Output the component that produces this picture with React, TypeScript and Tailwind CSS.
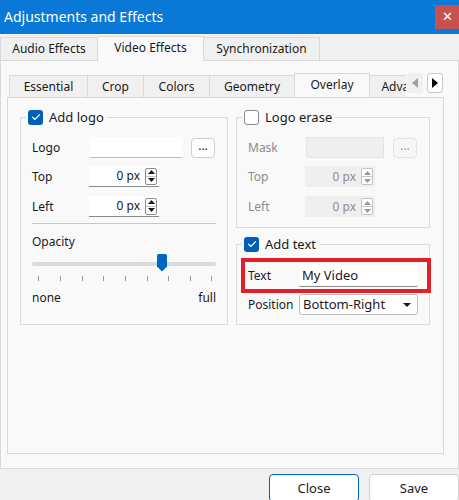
import React from 'react';

const CheckBox = ({ checked }: { checked: boolean }) =>
  checked ? (
    <span className="w-[15px] h-[15px] rounded-[3px] bg-[#005fb8] flex items-center justify-center">
      <svg width="10" height="10" viewBox="0 0 10 10" fill="none">
        <path d="M1.5 5.2l2.3 2.3L8.6 2.6" stroke="#fff" strokeWidth="1.1" strokeLinecap="round" strokeLinejoin="round" />
      </svg>
    </span>
  ) : (
    <span className="w-[15px] h-[15px] rounded-[3px] bg-white border border-[#878787]" />
  );

const Spinner = ({ disabled }: { disabled?: boolean }) => {
  const c = disabled ? '#9a9a9a' : '#1a1a1a';
  return (
    <div className={`flex flex-col w-[12px] h-[17px] border ${disabled ? 'border-[#c4c4c4]' : 'border-[#8c8c8c]'} rounded-[2px] bg-white`}>
      <div className="flex-1 flex items-center justify-center border-b border-[#c4c4c4]">
        <svg width="7" height="4" viewBox="0 0 7 4"><path d="M0 4L3.5 0L7 4Z" fill={c} /></svg>
      </div>
      <div className="flex-1 flex items-center justify-center">
        <svg width="7" height="4" viewBox="0 0 7 4"><path d="M0 0L3.5 4L7 0Z" fill={c} /></svg>
      </div>
    </div>
  );
};

const SpinBox = ({ disabled }: { disabled?: boolean }) => (
  <div
    className={`w-[70px] h-[21px] flex items-center justify-end pr-[2px] gap-[5px] ${
      disabled ? 'bg-[#efefef] text-[#8c8c8c]' : 'bg-white border-b border-[#8a8a8a] text-[#1a1a1a]'
    }`}
  >
    <span>0 px</span>
    <Spinner disabled={disabled} />
  </div>
);

const DotsButton = ({ disabled }: { disabled?: boolean }) => (
  <div
    className={`w-[24px] h-[20px] rounded-[4px] border flex items-center justify-center pb-[4px] ${
      disabled ? 'border-[#e3e3e3] bg-[#f7f7f7] text-[#9a9a9a]' : 'border-[#d0d0d0] bg-white text-[#1a1a1a]'
    }`}
  >
    ...
  </div>
);

export default function App() {
  const outerTabs = [
    { label: 'Audio Effects', w: 'w-[98px]' },
    { label: 'Video Effects', w: 'w-[107px]', active: true },
    { label: 'Synchronization', w: 'w-[117px]' },
  ];
  const innerTabs = [
    { label: 'Essential', w: 'w-[79px]' },
    { label: 'Crop', w: 'w-[57px]' },
    { label: 'Colors', w: 'w-[67px]' },
    { label: 'Geometry', w: 'w-[86px]' },
    { label: 'Overlay', w: 'w-[76px]', active: true },
    { label: 'Advanced', w: 'w-[80px]' },
  ];
  const ticks = [38, 60, 82, 103, 125, 147, 168, 190, 211];

  return (
    <div className="w-[459px] h-[500px] bg-[#f0f0f0] flex flex-col overflow-hidden font-['Noto_Sans',sans-serif] text-[12px] text-[#1a1a1a] leading-none">
      {/* Title bar */}
      <div className="h-[34px] bg-[#0a78d7] flex items-center justify-between shrink-0">
        <span className="pl-[4px] text-white text-[14px]">Adjustments and Effects</span>
        <div className="w-[24px] h-[24px] bg-[#c75050] text-white flex items-center justify-center text-[13px] mb-[1px]">
          ✕
        </div>
      </div>

      {/* Outer tabs */}
      <div className="h-[26px] flex items-end shrink-0">
        {outerTabs.map((t) =>
          t.active ? (
            <div key={t.label} className={`${t.w} h-[25px] -mb-px -ml-px bg-[#f9f9f9] border border-b-0 border-[#d9d9d9] flex items-center justify-center pb-[2px] z-10`}>
              {t.label}
            </div>
          ) : (
            <div key={t.label} className={`${t.w} h-[23px] bg-[#f0f0f0] border border-b-0 border-[#d9d9d9] -ml-px first:ml-0 flex items-center justify-center`}>
              {t.label}
            </div>
          )
        )}
      </div>

      {/* Outer pane */}
      <div className="h-[409px] w-[459px] bg-[#f9f9f9] border border-[#d9d9d9] shrink-0 pl-[6px] pt-[11px]">
        {/* Inner tabs */}
        <div className="w-[436px] h-[25px] flex items-end relative">
          <div className="flex items-end w-[399px] overflow-hidden">
            {innerTabs.map((t) =>
              t.active ? (
                <div key={t.label} className={`${t.w} shrink-0 h-[25px] -mb-px -ml-px bg-[#f9f9f9] border border-b-0 border-[#d9d9d9] flex items-center justify-center pb-[2px] z-10`}>
                  {t.label}
                </div>
              ) : (
                <div key={t.label} className={`${t.w} shrink-0 h-[22px] bg-[#f0f0f0] border border-b-0 border-[#d9d9d9] -ml-px first:ml-[2px] flex items-center justify-center`}>
                  {t.label}
                </div>
              )
            )}
          </div>
          <div className="absolute right-0 top-[1px] flex gap-[4px]">
            <div className="w-[16px] h-[20px] bg-[#f0f0f0] flex items-center justify-center rounded-[2px]">
              <svg width="6" height="10" viewBox="0 0 6 10"><path d="M6 0L0 5L6 10Z" fill="#a0a0a0" /></svg>
            </div>
            <div className="w-[16px] h-[20px] bg-white border border-[#c8c8c8] rounded-[3px] flex items-center justify-center">
              <svg width="6" height="10" viewBox="0 0 6 10"><path d="M0 0L6 5L0 10Z" fill="#000" /></svg>
            </div>
          </div>
        </div>

        {/* Inner pane */}
        <div className="w-[437px] h-[357px] border border-[#d9d9d9] bg-[#f9f9f9] pl-[12px] pt-[11px] flex gap-[8px]">
          {/* Left: Add logo */}
          <fieldset className="w-[208px] h-[216px] border border-[#dcdcdc] px-[11px]">
            <legend className="-ml-[6px] px-[2px] flex items-center gap-[6px] h-[16px]">
              <CheckBox checked />
              <span className="text-[13px] pr-[1px]">Add logo</span>
            </legend>
            <div className="mt-[12px] flex items-center h-[21px]">
              <span className="w-[58px]">Logo</span>
              <div className="w-[92px] h-[21px] bg-white border-b border-[#bdbdbd]" />
              <div className="ml-[9px]"><DotsButton /></div>
            </div>
            <div className="mt-[8px] flex items-center">
              <span className="w-[57px]">Top</span>
              <SpinBox />
            </div>
            <div className="mt-[9px] flex items-center">
              <span className="w-[57px]">Left</span>
              <SpinBox />
            </div>
            <div className="mt-[6px] h-px bg-[#c8c8c8]" />
            <div className="mt-[12px]">Opacity</div>
            <div className="relative mt-[14px] h-[4px] bg-[#dadada] rounded-full">
              <svg className="absolute left-[125px] -top-[8px]" width="10" height="18" viewBox="0 0 10 18">
                <path d="M1.5 0H8.5Q10 0 10 1.5V12.5L5 17.5L0 12.5V1.5Q0 0 1.5 0Z" fill="#0067c0" />
              </svg>
            </div>
            <div className="relative h-[15px]">
              {ticks.map((x) => (
                <span key={x} className="absolute top-[10px] w-px h-[5px] bg-[#9a9a9a]" style={{ left: x - 32 }} />
              ))}
            </div>
            <div className="mt-[11px] flex justify-between">
              <span>none</span>
              <span>full</span>
            </div>
          </fieldset>

          {/* Right column */}
          <div className="w-[194px] flex flex-col gap-[8px]">
            <fieldset className="h-[119px] border border-[#dcdcdc] px-[11px]">
              <legend className="-ml-[6px] px-[2px] flex items-center gap-[6px] h-[16px]">
                <CheckBox checked={false} />
                <span className="text-[13px] pr-[1px]">Logo erase</span>
              </legend>
              <div className="mt-[12px] flex items-center h-[21px] text-[#8c8c8c]">
                <span className="w-[58px]">Mask</span>
                <div className="w-[78px] h-[21px] bg-[#efefef] border border-[#e4e4e4]" />
                <div className="ml-[9px]"><DotsButton disabled /></div>
              </div>
              <div className="mt-[8px] flex items-center text-[#8c8c8c]">
                <span className="w-[57px]">Top</span>
                <SpinBox disabled />
              </div>
              <div className="mt-[9px] flex items-center text-[#8c8c8c]">
                <span className="w-[57px]">Left</span>
                <SpinBox disabled />
              </div>
            </fieldset>

            <fieldset className="h-[89px] border border-[#dcdcdc] pl-[4px] pr-0">
              <legend className="ml-[1px] px-[2px] flex items-center gap-[6px] h-[16px]">
                <CheckBox checked />
                <span className="text-[13px] pr-[1px]">Add text</span>
              </legend>
              <div className="mt-[6px] -mr-[2px] h-[35px] border-[4px] border-[#e3202a] flex items-center pl-[3px]">
                <span className="w-[51px]">Text</span>
                <div className="w-[119px] h-[22px] bg-white border-b border-[#8a8a8a] rounded-[2px] flex items-center pl-[3px] text-[13px]">
                  My Video
                </div>
              </div>
              <div className="mt-[1px] flex items-center pl-[7px]">
                <span className="w-[51px]">Position</span>
                <div className="w-[119px] h-[21px] bg-white border border-[#bdbdbd] rounded-[3px] flex items-center justify-between pl-[3px] pr-[6px] text-[13px]">
                  <span>Bottom-Right</span>
                  <svg width="8" height="4" viewBox="0 0 8 4"><path d="M0 0L4 4L8 0Z" fill="#1a1a1a" /></svg>
                </div>
              </div>
            </fieldset>
          </div>
        </div>
      </div>

      {/* Bottom buttons */}
      <div className="flex-1 flex items-start justify-end gap-[10px] pt-[5px]">
        <div className="w-[90px] h-[28px] rounded-[4px] border border-[#0067c0] bg-white flex items-center justify-center text-[13px]">
          Close
        </div>
        <div className="w-[90px] h-[28px] rounded-[4px] border border-[#d0d0d0] bg-white flex items-center justify-center text-[13px]">
          Save
        </div>
      </div>
    </div>
  );
}
